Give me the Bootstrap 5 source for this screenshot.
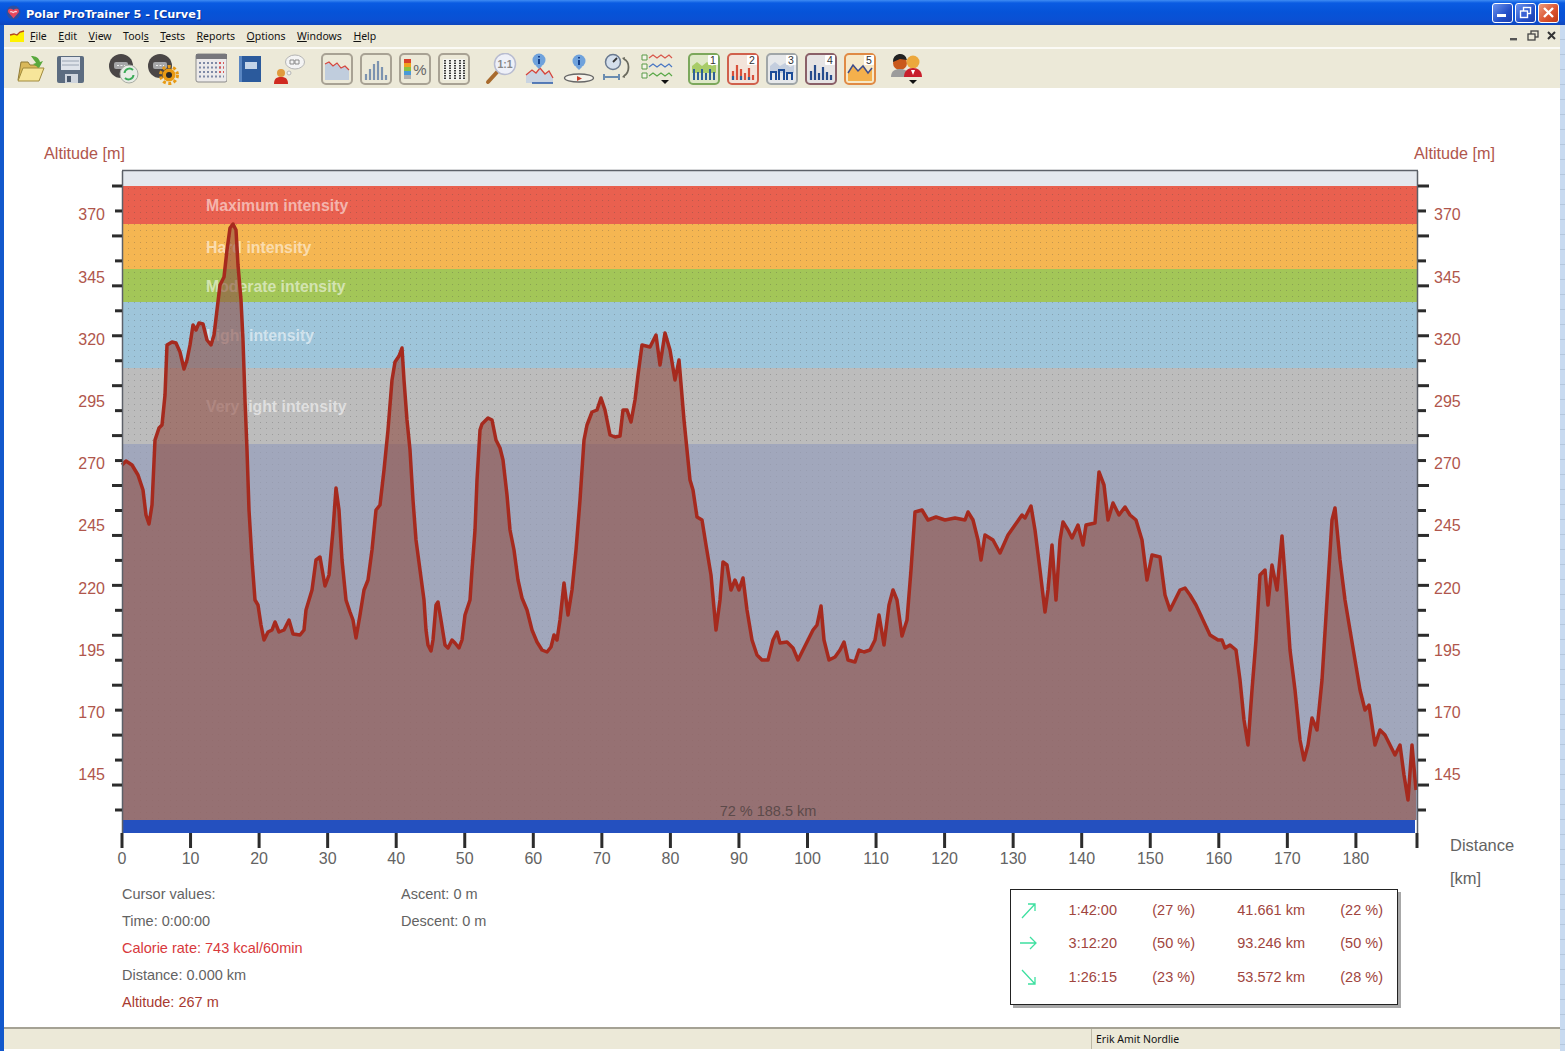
<!DOCTYPE html>
<html lang="en">
<head>
<meta charset="UTF-8">
<title>Polar ProTrainer 5 - [Curve]</title>
<link href="https://cdn.jsdelivr.net/npm/bootstrap@5.3.0/dist/css/bootstrap.min.css" rel="stylesheet">
<style>
    html, body { height: 100%; overflow: hidden; background: #fff; }
    body { font-family: "Liberation Sans", Arial, sans-serif; }
    .app { width: 1565px; height: 1051px; }
    .titlebar {
        height: 25px; padding-left: 6px; padding-right: 6px;
        background: linear-gradient(#3f8cf3 0, #0a5be2 3px, #0653d8 12px, #0a50d4 20px, #0e46bd 25px);
        color: #fff; font: bold 11.3px "DejaVu Sans", sans-serif;
    }
    .titlebar .title { margin-left: 5px; padding-top: 3px; text-shadow: 1px 1px 0 #0a2f90; }
    .winbtn { width: 21px; height: 20px; border: 1px solid #fff; border-radius: 3px; margin-left: 2px; background: linear-gradient(135deg, #6d94ee, #2450c8 60%, #1c3fb0); }
    .winbtn.close { background: linear-gradient(135deg, #ee9a7c, #d9512c 60%, #bf3a16); opacity: 1; }
    .edge-left { width: 4px; background: #1258cc; }
    .edge-right { width: 5px; background: repeating-linear-gradient(#c8daf0 0, #c8daf0 14px, #9fb2c8 15px); }
    .menubar { height: 22px; padding-left: 5px; gap: 11.5px; background: #ece9d8; font: 10.5px "Noto Sans", sans-serif; color: #111; }
    .menubar .logo { margin-right: -6.5px; }
    .menubar u { text-underline-offset: 1px; }
    .mdi-group { gap: 3px; }
    .mdibtn { width: 16px; height: 16px; }
    .toolbar { height: 41px; background: #ece9d8; border-top: 2px solid #fbfaf5; padding-left: 11px; }
    .toolbar .cell { width: 39px; }
    .toolbar svg { width: 32px; height: 32px; }
    .g1 { margin-right: 15px; }
    .g2 { margin-right: 9px; }
    .g3 { margin-right: 8px; }
    .g3a { margin-right: 7.5px; }
    .g4 { margin-right: 7px; }
    .chart { width: 1556px; height: 792px; overflow: visible; font-family: "Liberation Sans", Arial, sans-serif; }
    .info { height: 147px; padding-left: 118px; padding-top: 1px; font-size: 14.5px; color: #636363; line-height: 27px; }
    .cursor-col { width: 279px; }
    .ascent-col { flex: 0 0 367px; }
    .text-cal { color: #d8393c; }
    .text-alt { color: #a83a30; }
    .lap-box {
        width: 388px; height: 116px; margin-left: 242px; margin-top: 8px; padding: 3px 0 0 8px;
        border: 1.5px solid #222; background: #fff; box-shadow: 3px 3px 0 #a8a8a8;
        display: grid; grid-template-columns: 30px 68px 78px 110px 78px; grid-auto-rows: 33.5px;
        align-items: center; text-align: right; color: #a0453e; line-height: 1;
    }
    .lap-box svg { display: block; width: 20px; height: 20px; }
    .statusbar { height: 22px; background: #ece9d8; border-top: 2px solid #a5a294; font: 10.5px "Noto Sans", sans-serif; color: #111; }
    .status-name { margin-left: 1087px; padding-left: 4px; border-left: 1px solid #bdb9a6; height: 100%; line-height: 20px; }
</style>
</head>
<body>
<div class="app d-flex flex-column">
    <div class="titlebar d-flex align-items-center">
        <svg width="15" height="15" viewBox="0 0 16 16"><circle cx="8" cy="8" r="7.4" fill="#2f4f9e"/><path d="M8 14 2.500 8C1 4.500 5 2.500 8 5.400 11 2.500 15 4.500 13.500 8Z" fill="#e8485c"/><path d="M4.500 7.500C6 6 7 8.500 8 8s2-2 3.500-.5" fill="none" stroke="#fbd6dc" stroke-width="1.300"/></svg>
        <span class="title">Polar ProTrainer 5 - [Curve]</span>
        <div class="ms-auto d-flex">
            <div class="winbtn d-flex align-items-end justify-content-center pb-1"><svg width="11" height="4"><rect y="0" width="9" height="3" fill="#fff"/></svg></div>
            <div class="winbtn d-flex align-items-center justify-content-center"><svg width="13" height="13" fill="none" stroke="#fff" stroke-width="1.4"><rect x="4.5" y="1.5" width="7" height="6"/><rect x="1.5" y="5" width="7" height="6.5" fill="#3a62d4"/></svg></div>
            <div class="winbtn close d-flex align-items-center justify-content-center"><svg width="13" height="13" stroke="#fff" stroke-width="2.4"><path d="M2 2 11 11M11 2 2 11"/></svg></div>
        </div>
    </div>
    <div class="d-flex flex-grow-1">
        <div class="edge-left"></div>
        <div class="flex-grow-1 d-flex flex-column">
            <div class="menubar d-flex align-items-center">
                <svg class="logo" width="16" height="13" viewBox="0 0 16 13"><path d="M1 5 5 4 8 5 11 2 15 1V12H1Z" fill="#fff200"/><path d="M1 5 5 4 8 5 11 2 15 1" fill="none" stroke="#b3461e" stroke-width="1.3"/></svg>
                <span><u>F</u>ile</span>
                <span><u>E</u>dit</span>
                <span><u>V</u>iew</span>
                <span>Tool<u>s</u></span>
                <span><u>T</u>ests</span>
                <span><u>R</u>eports</span>
                <span><u>O</u>ptions</span>
                <span><u>W</u>indows</span>
                <span><u>H</u>elp</span>
                <div class="ms-auto d-flex align-items-center mdi-group">
                    <svg class="mdibtn" viewBox="0 0 16 16"><rect x="4" y="10" width="7" height="2.4" fill="#555"/></svg>
                    <svg class="mdibtn" viewBox="0 0 16 16" fill="none" stroke="#444" stroke-width="1.3"><rect x="6" y="3" width="7" height="6"/><rect x="3" y="6" width="7" height="6" fill="#ece9d8"/></svg>
                    <svg class="mdibtn" viewBox="0 0 16 16" stroke="#333" stroke-width="2"><path d="M4 4 11 11M11 4 4 11"/></svg>
                </div>
            </div>
            <div class="toolbar d-flex align-items-center">
                <!-- file -->
                <div class="cell"><svg viewBox="0 0 32 32"><path d="M3 27 6 9h7l2 3h8v15Z" fill="#d9b85a" stroke="#8f7a36"/><path d="M3 28 8 15h21l-5 13Z" fill="#f7e59a" stroke="#a08a3c"/><path d="M16 3c5 0 8 2 9 6l3-1-4 7-6-4 3-1c-1-2-3-4-5-7Z" fill="#58a83c"/></svg></div>
                <div class="cell g1"><svg viewBox="0 0 32 32"><rect x="3" y="3" width="27" height="27" rx="2" fill="#5c6c80"/><rect x="7" y="4" width="19" height="13" fill="#dfe3ea"/><path d="M8 8h17M8 12h17" stroke="#9aa4b2"/><rect x="11" y="21" width="13" height="9" fill="#cfd5dd"/><rect x="13" y="23" width="4" height="6" fill="#4a586c"/></svg></div>
                <!-- device -->
                <div class="cell"><svg viewBox="0 0 32 32"><circle cx="13" cy="13" r="12" fill="#4a4646"/><rect x="6" y="9" width="14" height="7" rx="2" fill="#a6a6a8"/><path d="M9 12.500h8" stroke="#eee" stroke-dasharray="2 1.500"/><circle cx="21" cy="21" r="9" fill="#e8ece6" stroke="#a8aca4"/><path d="M16.500 20a5 5 0 0 1 8.500-3M25.500 22a5 5 0 0 1-8.500 3" fill="none" stroke="#3cac58" stroke-width="2"/></svg></div>
                <div class="cell g2"><svg viewBox="0 0 32 32"><circle cx="13" cy="13" r="12" fill="#4a4646"/><rect x="6" y="9" width="14" height="7" rx="2" fill="#a6a6a8"/><path d="M9 12.500h8" stroke="#eee" stroke-dasharray="2 1.500"/><circle cx="22" cy="22" r="6.500" fill="#e89a14"/><circle cx="22" cy="22" r="8.500" fill="none" stroke="#e89a14" stroke-width="3" stroke-dasharray="3 2.500"/><circle cx="22" cy="22" r="3" fill="#2a2a2a"/></svg></div>
                <!-- diary -->
                <div class="cell"><svg viewBox="0 0 32 32"><rect x="1" y="1" width="31" height="28" rx="2" fill="#eceaea" stroke="#8a8a8a"/><rect x="1" y="1" width="31" height="5" fill="#77777c"/><path d="M4 10h25M4 14.500h25M4 19h25M4 23.500h25" stroke="#7f8aa6" stroke-width="2" stroke-dasharray="2 2"/><path d="M24 10h5M24 14.500h5M24 19h5" stroke="#d85a5a" stroke-width="2" stroke-dasharray="2 2"/></svg></div>
                <div class="cell"><svg viewBox="0 0 32 32"><path d="M5 3h22v26H7l-2-2Z" fill="#2b5a9c"/><path d="M5 3h3v26H5Z" fill="#5a86c2"/><rect x="11" y="9" width="12" height="7" fill="#c4d4e8"/></svg></div>
                <div class="cell g2"><svg viewBox="0 0 32 32"><circle cx="8" cy="20" r="4" fill="#e09a3c"/><path d="M1 31c0-6 3-7 7-7s7 1 7 7Z" fill="#d02a20"/><ellipse cx="22" cy="9" rx="9.500" ry="7" fill="#f4f4f4" stroke="#b4b4b4"/><path d="M17 7h4v4h-4ZM22 7h4v4h-4Z" fill="none" stroke="#8a8a8a"/><circle cx="16" cy="20" r="2" fill="#f4f4f4" stroke="#b4b4b4"/></svg></div>
                <!-- views -->
                <div class="cell"><svg viewBox="0 0 32 32"><rect x="1" y="1" width="30" height="30" rx="4" fill="#ece9d8" stroke="#a8a294" stroke-width="2"/><path d="M4 11 8 9 12 13 16 10 20 15 24 13 28 17V27H4Z" fill="#c0cddd"/><path d="M4 11 8 9 12 13 16 10 20 15 24 13 28 17" fill="none" stroke="#d6453c" stroke-width="1.200"/></svg></div>
                <div class="cell"><svg viewBox="0 0 32 32"><rect x="1" y="1" width="30" height="30" rx="4" fill="#ece9d8" stroke="#a8a294" stroke-width="2"/><path d="M6 27V21M10 27V16M14 27V11M18 27V8M22 27V14M26 27V22" stroke="#7c93b0" stroke-width="2.200"/></svg></div>
                <div class="cell"><svg viewBox="0 0 32 32"><rect x="1" y="1" width="30" height="30" rx="4" fill="#ece9d8" stroke="#a8a294" stroke-width="2"/><rect x="5" y="6" width="7" height="4" fill="#d8402c"/><rect x="5" y="10" width="7" height="4" fill="#f0a020"/><rect x="5" y="14" width="7" height="4" fill="#8cc040"/><rect x="5" y="18" width="7" height="4" fill="#4a9ad8"/><rect x="5" y="22" width="7" height="4" fill="#b0b0b0"/><text x="21" y="22" font-size="15" fill="#666" text-anchor="middle" font-family="Liberation Sans">%</text></svg></div>
                <div class="cell g3a"><svg viewBox="0 0 32 32"><rect x="1" y="1" width="30" height="30" rx="4" fill="#ece9d8" stroke="#a8a294" stroke-width="2"/><rect x="5" y="6" width="22" height="21" fill="#f4f4f0"/><path d="M7 7V26M12 7V26M17 7V26M22 7V26M26 7V26" stroke="#3a3a3a" stroke-width="2" stroke-dasharray="1.500 1"/></svg></div>
                <!-- tools -->
                <div class="cell"><svg viewBox="0 0 32 32"><path d="M3 29 13 18" stroke="#a86a2c" stroke-width="4" stroke-linecap="round"/><circle cx="20" cy="11" r="10.500" fill="#eef0f8" stroke="#b8bcd0" stroke-width="1.500"/><text x="20" y="15" font-size="10.500" font-weight="bold" fill="#888" text-anchor="middle" font-family="Liberation Sans">1:1</text></svg></div>
                <div class="cell"><svg viewBox="0 0 32 32"><path d="M2 22 8 17 12 20 16 15 21 21 25 18 29 25V30H2Z" fill="#c9d4e2"/><path d="M2 22 8 17 12 20 16 15 21 21 25 18 29 25" fill="none" stroke="#d6453c" stroke-width="1.300"/><path d="M8 30H29" stroke="#2a5aa8" stroke-width="1.500"/><circle cx="15" cy="7" r="6.500" fill="#6fa2dc"/><path d="M15 3v1.500M15 6v5" stroke="#14408c" stroke-width="2"/><path d="M12 13h6l-3 3Z" fill="#6fa2dc"/></svg></div>
                <div class="cell"><svg viewBox="0 0 32 32"><ellipse cx="16" cy="25" rx="14.500" ry="4" fill="#f4f2ea" stroke="#666" stroke-width="1.300"/><path d="M14 23 19 25.500 14 28Z" fill="#c8402c"/><circle cx="16" cy="8" r="6.500" fill="#6fa2dc"/><path d="M16 4v1.500M16 7v5" stroke="#14408c" stroke-width="2"/><path d="M13 14h6l-3 3Z" fill="#6fa2dc"/></svg></div>
                <div class="cell"><svg viewBox="0 0 32 32"><circle cx="11" cy="9" r="7.500" fill="#d4dfec" stroke="#6a7a90" stroke-width="1.500"/><path d="M11 9 15 5" stroke="#333" stroke-width="1.800"/><path d="M2 24h15M2 21v6M17 21v6" stroke="#6a8cb0" stroke-width="2"/><path d="M22 6c6 3 6 13 0 17" fill="none" stroke="#6a6a5e" stroke-width="1.800"/><path d="M20 5l3-1-.5 3.500ZM20 24l3 1-.5-3.500Z" fill="#6a6a5e"/></svg></div>
                <div class="cell g3"><svg viewBox="0 0 32 32"><path d="M1 2h5v5H1ZM1 11h5v5H1ZM1 20h5v5H1Z" fill="#f4f4e8" stroke="#5a9a48"/><path d="M8 5l4-3 4 3 4-3 4 3 4-3 3 3" fill="none" stroke="#d8584c" stroke-width="1.200"/><path d="M8 14l4-3 4 3 4-3 4 3 4-3 3 3" fill="none" stroke="#4a78c4" stroke-width="1.200"/><path d="M8 23l4-3 4 3 4-3 4 3 4-3 3 3" fill="none" stroke="#5aa848" stroke-width="1.200"/><path d="M20 27h8l-4 4Z" fill="#111"/></svg></div>
                <!-- laps -->
                <div class="cell"><svg viewBox="0 0 32 32"><rect x="1" y="1" width="30" height="30" rx="4" fill="#dfe8c8" stroke="#7ca85c" stroke-width="2"/><path d="M4 13 9 9 14 13 19 9 24 13 28 11V20H4Z" fill="#a8cc68"/><path d="M6 27V16M10 27V19M14 27V16M18 27V20M22 27V16M26 27V19" stroke="#2e6098" stroke-width="2"/><rect x="20" y="2" width="10" height="10" rx="1" fill="#fff"/><text x="25" y="11" font-size="10.500" fill="#333" text-anchor="middle" font-family="Liberation Sans">1</text></svg></div>
                <div class="cell"><svg viewBox="0 0 32 32"><rect x="1" y="1" width="30" height="30" rx="4" fill="#f3e4da" stroke="#d0604c" stroke-width="2"/><path d="M6 27V18M10 27V12M14 27V16M18 27V20M22 27V15M26 27V22" stroke="#d8503c" stroke-width="2.200"/><path d="M6 27V23M14 27V23M22 27V24" stroke="#2e6098" stroke-width="2.200"/><rect x="20" y="2" width="10" height="10" rx="1" fill="#fff"/><text x="25" y="11" font-size="10.500" fill="#333" text-anchor="middle" font-family="Liberation Sans">2</text></svg></div>
                <div class="cell"><svg viewBox="0 0 32 32"><rect x="1" y="1" width="30" height="30" rx="4" fill="#e6e8ea" stroke="#a0a6a8" stroke-width="2"/><path d="M4 13 9 9 14 13 19 10 24 14 28 12V20H4Z" fill="#c4cede"/><path d="M5 27V19h5v8M13 27V17h5v10M21 27V20h5v7" fill="none" stroke="#1c4c98" stroke-width="2"/><rect x="20" y="2" width="10" height="10" rx="1" fill="#fff"/><text x="25" y="11" font-size="10.500" fill="#333" text-anchor="middle" font-family="Liberation Sans">3</text></svg></div>
                <div class="cell"><svg viewBox="0 0 32 32"><rect x="1" y="1" width="30" height="30" rx="4" fill="#e6e4e4" stroke="#8a6068" stroke-width="2"/><path d="M6 27V18M10 27V12M14 27V20M18 27V14M22 27V19M26 27V22" stroke="#274c8c" stroke-width="2.200"/><rect x="20" y="2" width="10" height="10" rx="1" fill="#fff"/><text x="25" y="11" font-size="10.500" fill="#333" text-anchor="middle" font-family="Liberation Sans">4</text></svg></div>
                <div class="cell g4"><svg viewBox="0 0 32 32"><rect x="1" y="1" width="30" height="30" rx="4" fill="#f6e8c8" stroke="#e08a44" stroke-width="2"/><path d="M4 20 9 12 14 18 19 13 24 20 28 15V28H4Z" fill="#f4b04c"/><path d="M4 20 9 12 14 18 19 13 24 20 28 15" fill="none" stroke="#3c4c8c" stroke-width="1.500"/><rect x="20" y="2" width="10" height="10" rx="1" fill="#fff"/><text x="25" y="11" font-size="10.500" fill="#333" text-anchor="middle" font-family="Liberation Sans">5</text></svg></div>
                <!-- people -->
                <div class="cell"><svg viewBox="0 0 32 32"><circle cx="10" cy="10" r="7" fill="#c9591c"/><path d="M3 9a7 7 0 0 1 14-2L10 6Z" fill="#222"/><path d="M1 24c0-6 4-8 9-8s9 2 9 8Z" fill="#9c9c9c"/><circle cx="23" cy="9" r="6.500" fill="#eca83c"/><path d="M14 24c0-6 4-9 9-9s9 3 9 9Z" fill="#c81e2c"/><path d="M21 17h4l-2 5Z" fill="#fff"/><path d="M19 27h8l-4 4Z" fill="#111"/></svg></div>
            </div>
            <svg class="chart" id="chart" viewBox="4 88 1556 792">
                <defs>
                    <pattern id="dots" width="6" height="6" patternUnits="userSpaceOnUse"><rect x="2" y="2" width="1" height="1" fill="#444" fill-opacity=".28"/></pattern>
                    <pattern id="dots2" width="6" height="6" patternUnits="userSpaceOnUse"><rect x="2" y="2" width="1" height="1" fill="#444" fill-opacity=".1"/></pattern>
                </defs>
                <rect x="122" y="171" width="1296" height="16" fill="#e4e8ee"/>
                <rect x="122" y="186" width="1296" height="38" fill="#e9604f"/>
                <rect x="122" y="224" width="1296" height="45" fill="#f5b652"/>
                <rect x="122" y="269" width="1296" height="33" fill="#a3c658"/>
                <rect x="122" y="302" width="1296" height="66" fill="#9ec5da"/>
                <rect x="122" y="368" width="1296" height="76" fill="#bcbcbc"/>
                <rect x="122" y="444" width="1296" height="376" fill="#a1a7bc"/>
                <rect x="122" y="186" width="1296" height="258" fill="url(#dots)"/>
                <rect x="122" y="444" width="1296" height="376" fill="url(#dots2)"/>
                <g font-size="15.800" font-weight="bold" fill="#fff" fill-opacity=".55">
                    <text x="206" y="211">Maximum intensity</text>
                    <text x="206" y="253">Hard intensity</text>
                    <text x="206" y="292">Moderate intensity</text>
                    <text x="206" y="341">Light intensity</text>
                    <text x="206" y="412">Very light intensity</text>
                </g>
                <polygon id="area" fill="#8f4c43" fill-opacity=".6"/>
                <rect x="122" y="820" width="1293" height="13" fill="#2450bf"/>
                <polyline id="line" fill="none" stroke="#a62a1e" stroke-width="3.500" stroke-linejoin="round"/>
                <text x="768" y="816" font-size="14.500" fill="#5c4a4a" text-anchor="middle">72 % 188.5 km</text>
                <path d="M122.500 171V833M1417.500 171V833" stroke="#5c6068" stroke-width="1.500"/>
                <path d="M122 170.500H1418" stroke="#5c6068" stroke-width="1.500"/>
                <g id="ticks" stroke="#2c2c2c" stroke-width="3"></g>
                <g id="labels" font-size="16" fill="#b0564c"></g>
                <g id="xlabels" font-size="16" fill="#636363" text-anchor="middle"></g>
                <text x="44" y="159" font-size="16.200" fill="#b0564c">Altitude [m]</text>
                <text x="1414" y="159" font-size="16.200" fill="#b0564c">Altitude [m]</text>
                <text x="1450" y="851" font-size="16.500" fill="#636363">Distance</text>
                <text x="1450" y="884" font-size="16.500" fill="#636363">[km]</text>
            </svg>
            <div class="info d-flex">
                <div class="cursor-col">
                    <div>Cursor values:</div>
                    <div>Time: 0:00:00</div>
                    <div class="text-cal">Calorie rate: 743 kcal/60min</div>
                    <div>Distance: 0.000 km</div>
                    <div class="text-alt">Altitude: 267 m</div>
                </div>
                <div class="ascent-col">
                    <div>Ascent: 0 m</div>
                    <div>Descent: 0 m</div>
                </div>
                <div class="lap-box">
                    <svg viewBox="0 0 20 20" fill="none" stroke="#3ee0a0" stroke-width="1.300"><path d="M3 18 16 4M9 4h7v7"/></svg>
                    <span>1:42:00</span><span>(27 %)</span><span>41.661 km</span><span>(22 %)</span>
                    <svg viewBox="0 0 20 20" fill="none" stroke="#3ee0a0" stroke-width="1.300"><path d="M1 10H17M11 4l6 6-6 6"/></svg>
                    <span>3:12:20</span><span>(50 %)</span><span>93.246 km</span><span>(50 %)</span>
                    <svg viewBox="0 0 20 20" fill="none" stroke="#3ee0a0" stroke-width="1.300"><path d="M3 3 16 17M9 17h7v-7"/></svg>
                    <span>1:26:15</span><span>(23 %)</span><span>53.572 km</span><span>(28 %)</span>
                </div>
            </div>
            <div class="statusbar d-flex"><div class="status-name">Erik Amit Nordlie</div></div>
        </div>
        <div class="edge-right"></div>
    </div>
</div>
<script src="https://cdn.jsdelivr.net/npm/bootstrap@5.3.0/dist/js/bootstrap.bundle.min.js"></script>
<script>
    // altitude curve, in page pixels
    const curve = [122,465,126,461,132,465,138,475,143,490,146,515,149,524,152,505,155,440,159,428,162,425,165,395,167,345,172,342,176,343,180,352,184,369,187,360,190,345,193,325,196,330,199,323,203,324,207,340,211,345,214,335,217,310,220,285,224,277,227,250,230,228,233,224,236,230,238,265,241,300,243,340,245,400,247,450,249,510,252,560,255,600,258,605,261,625,264,640,268,632,272,630,275,622,279,632,284,630,289,620,293,634,300,635,304,630,306,610,312,590,316,560,320,557,325,586,329,575,333,530,336,488,339,510,342,560,346,600,350,612,353,620,356,638,360,615,364,590,368,580,372,550,376,510,380,505,384,470,388,430,392,380,395,362,399,356,402,348,404,380,407,420,410,450,413,500,416,540,420,570,424,600,426,630,428,645,431,651,433,640,436,605,438,602,441,620,445,645,448,648,452,640,455,643,459,648,462,640,465,615,470,600,472,570,475,530,477,480,480,430,482,424,488,418,492,420,496,440,500,448,503,460,507,495,510,530,514,550,518,580,522,598,527,610,532,630,537,642,542,650,547,652,551,647,554,635,557,640,560,620,564,583,568,615,572,590,576,550,580,500,584,440,587,425,592,412,597,410,601,398,605,410,610,435,615,437,620,436,623,410,627,410,631,422,635,400,638,375,642,345,650,347,656,335,660,365,665,333,670,350,675,380,679,360,684,420,690,480,693,490,697,517,702,520,706,545,711,575,716,630,720,600,723,562,727,565,731,590,735,580,739,590,743,578,747,610,752,640,757,655,762,660,768,660,773,640,777,632,780,643,787,642,793,648,798,660,803,650,808,640,813,630,817,625,821,606,824,640,829,660,835,657,840,650,844,642,848,660,855,662,859,650,864,652,870,650,875,640,879,615,884,645,889,605,893,590,897,600,902,636,907,620,911,570,915,512,922,510,928,520,936,517,945,520,955,518,965,520,968,512,973,520,978,540,981,560,985,535,993,540,1000,553,1008,535,1015,525,1022,515,1025,518,1031,506,1035,530,1040,570,1045,612,1048,590,1052,545,1056,600,1060,540,1063,522,1068,530,1072,538,1078,525,1083,545,1086,525,1095,523,1099,472,1104,485,1108,520,1113,503,1119,515,1125,507,1130,515,1136,520,1142,540,1147,580,1152,555,1160,557,1165,595,1170,610,1175,600,1180,590,1185,588,1190,595,1196,605,1203,620,1210,635,1218,640,1222,640,1225,648,1230,645,1236,650,1240,680,1244,720,1248,745,1252,690,1256,640,1260,575,1265,570,1268,605,1272,565,1277,590,1282,536,1286,590,1290,650,1295,690,1300,740,1304,760,1308,745,1312,718,1317,730,1322,680,1327,600,1332,520,1335,508,1340,560,1345,600,1350,630,1355,660,1360,690,1365,710,1369,705,1375,745,1380,730,1385,735,1390,745,1395,755,1400,745,1404,775,1408,800,1412,745,1416,790];
    const pts = [];
    for (let i = 0; i < curve.length; i += 2) pts.push(curve[i] + ',' + curve[i + 1]);
    document.getElementById('line').setAttribute('points', pts.join(' '));
    document.getElementById('area').setAttribute('points', '122,820 ' + pts.join(' ') + ' 1416,820');

    const NS = 'http://www.w3.org/2000/svg';
    function add(parent, tag, attrs, text) {
        const el = document.createElementNS(NS, tag);
        for (const k in attrs) el.setAttribute(k, attrs[k]);
        if (text !== undefined) el.textContent = text;
        document.getElementById(parent).appendChild(el);
    }

    // y axis ticks on both sides
    for (let i = 0; i < 26; i++) {
        const y = 186 + i * 24.96;
        const len = i % 2 ? 7 : 10;
        add('ticks', 'line', { x1: 122 - len, x2: 122, y1: y, y2: y });
        add('ticks', 'line', { x1: 1418, x2: 1418 + len + 1, y1: y, y2: y });
    }
    // altitude labels
    for (let i = 0; i < 10; i++) {
        const y = 220.4 + i * 62.2;
        add('labels', 'text', { x: 105, y: y, 'text-anchor': 'end' }, 370 - i * 25);
        add('labels', 'text', { x: 1434, y: y }, 370 - i * 25);
    }
    // distance axis
    for (let i = 0; i <= 18; i++) {
        const x = 122 + i * 68.55;
        add('ticks', 'line', { x1: x, x2: x, y1: 833, y2: 848 });
        add('xlabels', 'text', { x: x, y: 864 }, i * 10);
    }
    add('ticks', 'line', { x1: 1417, x2: 1417, y1: 833, y2: 848 });
</script>
</body>
</html>
